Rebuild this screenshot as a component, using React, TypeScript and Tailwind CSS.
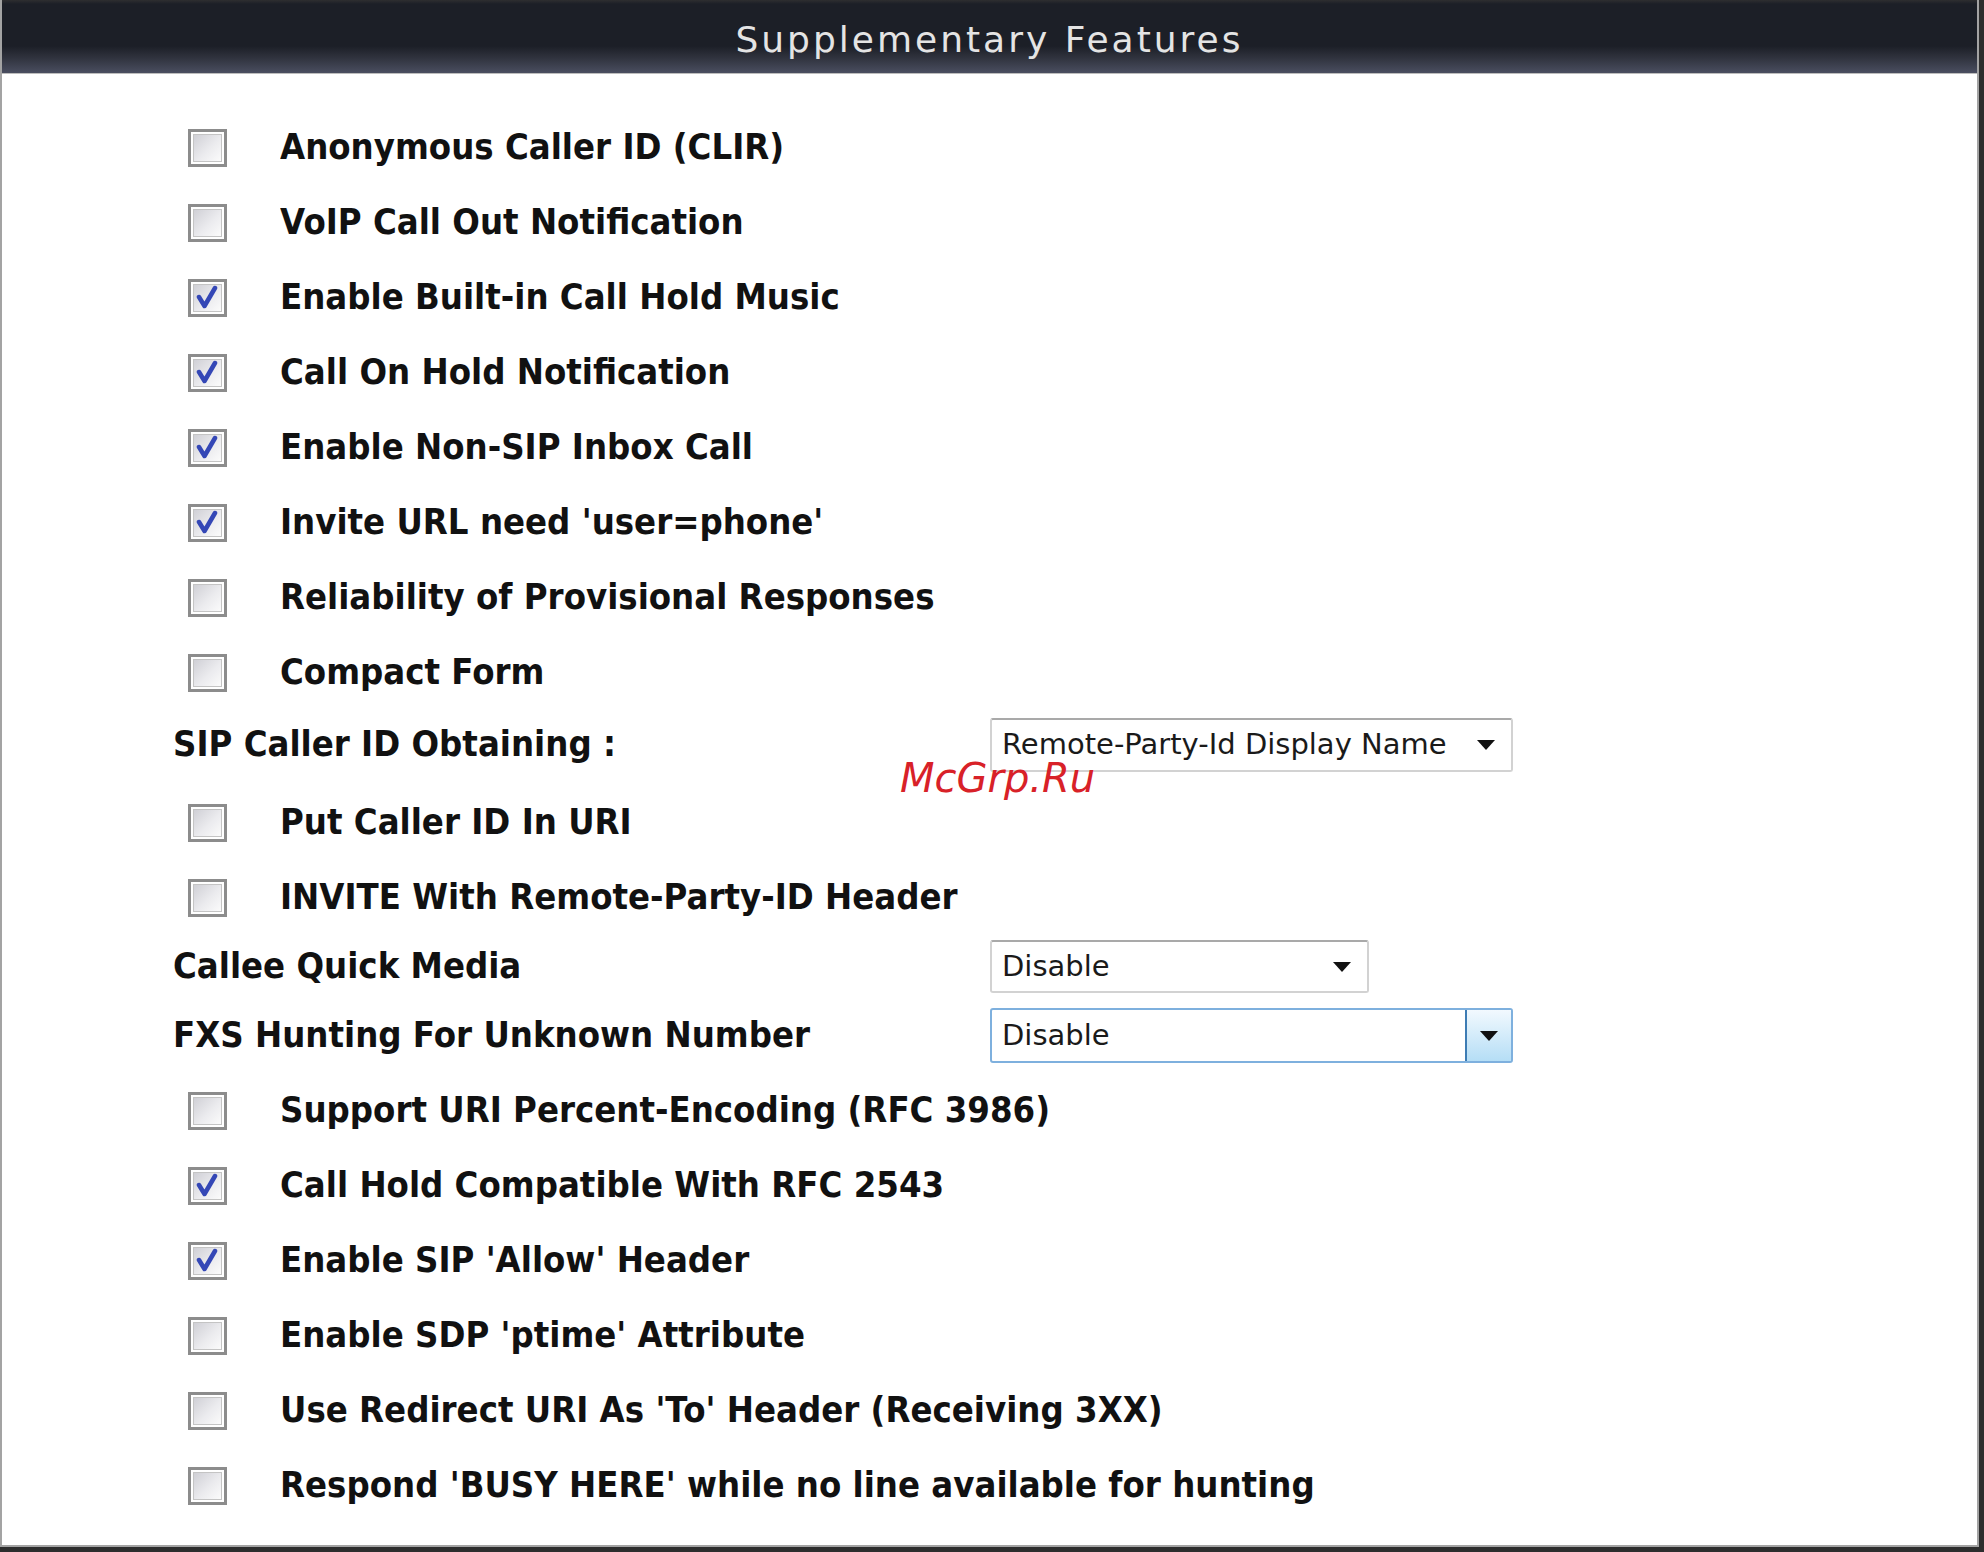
import React from "react";

type Row =
  | { kind: "check"; label: string; checked: boolean; h: string }
  | { kind: "select"; label: string; value: string; h: string; variant: "plain" | "narrow" | "focus" };

const rows: Row[] = [
  { kind: "check", label: "Anonymous Caller ID (CLIR)", checked: false, h: "h-[75px]" },
  { kind: "check", label: "VoIP Call Out Notification", checked: false, h: "h-[75px]" },
  { kind: "check", label: "Enable Built-in Call Hold Music", checked: true, h: "h-[75px]" },
  { kind: "check", label: "Call On Hold Notification", checked: true, h: "h-[75px]" },
  { kind: "check", label: "Enable Non-SIP Inbox Call", checked: true, h: "h-[75px]" },
  { kind: "check", label: "Invite URL need 'user=phone'", checked: true, h: "h-[75px]" },
  { kind: "check", label: "Reliability of Provisional Responses", checked: false, h: "h-[75px]" },
  { kind: "check", label: "Compact Form", checked: false, h: "h-[75px]" },
  { kind: "select", label: "SIP Caller ID Obtaining :", value: "Remote-Party-Id Display Name", h: "h-[69px] mb-[6px]", variant: "plain" },
  { kind: "check", label: "Put Caller ID In URI", checked: false, h: "h-[75px]" },
  { kind: "check", label: "INVITE With Remote-Party-ID Header", checked: false, h: "h-[75px]" },
  { kind: "select", label: "Callee Quick Media", value: "Disable", h: "h-[63px]", variant: "narrow" },
  { kind: "select", label: "FXS Hunting For Unknown Number", value: "Disable", h: "h-[75px]", variant: "focus" },
  { kind: "check", label: "Support URI Percent-Encoding (RFC 3986)", checked: false, h: "h-[75px]" },
  { kind: "check", label: "Call Hold Compatible With RFC 2543", checked: true, h: "h-[75px]" },
  { kind: "check", label: "Enable SIP 'Allow' Header", checked: true, h: "h-[75px]" },
  { kind: "check", label: "Enable SDP 'ptime' Attribute", checked: false, h: "h-[75px]" },
  { kind: "check", label: "Use Redirect URI As 'To' Header (Receiving 3XX)", checked: false, h: "h-[75px]" },
  { kind: "check", label: "Respond 'BUSY HERE' while no line available for hunting", checked: false, h: "h-[75px]" },
];

// the reference glyphs are a bit taller than DejaVu, so stretch them vertically
const labelFont =
  "font-['DejaVu_Sans',sans-serif] font-bold text-[32.5px] text-[#111111] leading-none whitespace-nowrap scale-y-[1.1] origin-center";

function Arrow() {
  return (
    <svg width="18" height="10" viewBox="0 0 18 10">
      <path d="M0 0 H18 L9 10 Z" fill="#111111" />
    </svg>
  );
}

function Checkbox({ checked }: { checked: boolean }) {
  return (
    <div className="w-[39px] h-[38px] shrink-0 border-[3px] border-[#8c8c8c] bg-white p-[2px]">
      <div className="relative w-full h-full border border-[#c4c4c4] bg-[linear-gradient(135deg,#d0d0d6_0%,#ebebee_55%,#fbfbfb_100%)]">
        {checked && (
          <svg className="absolute inset-0" width="27" height="26" viewBox="0 0 27 26">
            <path d="M5 12 L10.5 21 L21 3" fill="none" stroke="#3447b6" strokeWidth="4.5" strokeLinejoin="round" strokeLinecap="round" />
          </svg>
        )}
      </div>
    </div>
  );
}

function Select({ value, variant }: { value: string; variant: "plain" | "narrow" | "focus" }) {
  const text = "font-['DejaVu_Sans',sans-serif] text-[29px] text-[#1a1a1a] leading-none whitespace-nowrap";
  if (variant === "focus") {
    return (
      <div className="w-[523px] h-[55px] flex items-stretch rounded-[3px] border-2 border-[#7eb0de] bg-white">
        <div className={`flex-1 flex items-center pl-[10px] ${text}`}>{value}</div>
        <div className="w-[46px] flex items-center justify-center border-l-2 border-[#3d7cb4] bg-[linear-gradient(to_bottom,#f2f9fe,#b5def6)]">
          <Arrow />
        </div>
      </div>
    );
  }
  return (
    <div
      className={`${variant === "plain" ? "w-[523px] h-[54px]" : "w-[379px] h-[53px]"} flex items-center justify-between rounded-[3px] border-2 border-[#d2d2d2] border-t-[#a9a9a9] bg-white pl-[10px] pr-[16px]`}
    >
      <span className={text}>{value}</span>
      <Arrow />
    </div>
  );
}

export default function App() {
  return (
    <div className="relative w-[1984px] h-[1552px] border-r-[5px] border-b-[5px] border-[#2d2d2d] bg-white">
      <div className="h-full flex flex-col border-l-2 border-r-2 border-b-2 border-[#a3a3a3]">
        <div className="h-[74px] shrink-0 flex items-center justify-center pt-[6px] border-b border-[#bdbdbd] bg-[linear-gradient(to_bottom,#2e2e30_0px,#1c1f27_4px,#1c1f27_46px,#30333e_58px,#4a4e60_73px)]">
          <span className="font-['DejaVu_Sans',sans-serif] text-[36px] tracking-[3px] text-[#e4e4e4] leading-none">
            Supplementary Features
          </span>
        </div>

        <div className="pt-[36px] flex flex-col">
          {rows.map((r, i) =>
            r.kind === "check" ? (
              <div key={i} className={`${r.h} flex items-center pl-[186px] gap-[53px]`}>
                <Checkbox checked={r.checked} />
                <span className={labelFont}>{r.label}</span>
              </div>
            ) : (
              <div key={i} className={`${r.h} flex items-center pl-[171px]`}>
                <span className={`${labelFont} w-[817px]`}>{r.label}</span>
                <Select value={r.value} variant={r.variant} />
              </div>
            )
          )}
        </div>
      </div>

      <div className="absolute left-[900px] top-[758px] font-['DejaVu_Sans',sans-serif] italic text-[40px] leading-none text-[#d82128] whitespace-nowrap">
        McGrp.Ru
      </div>
    </div>
  );
}
